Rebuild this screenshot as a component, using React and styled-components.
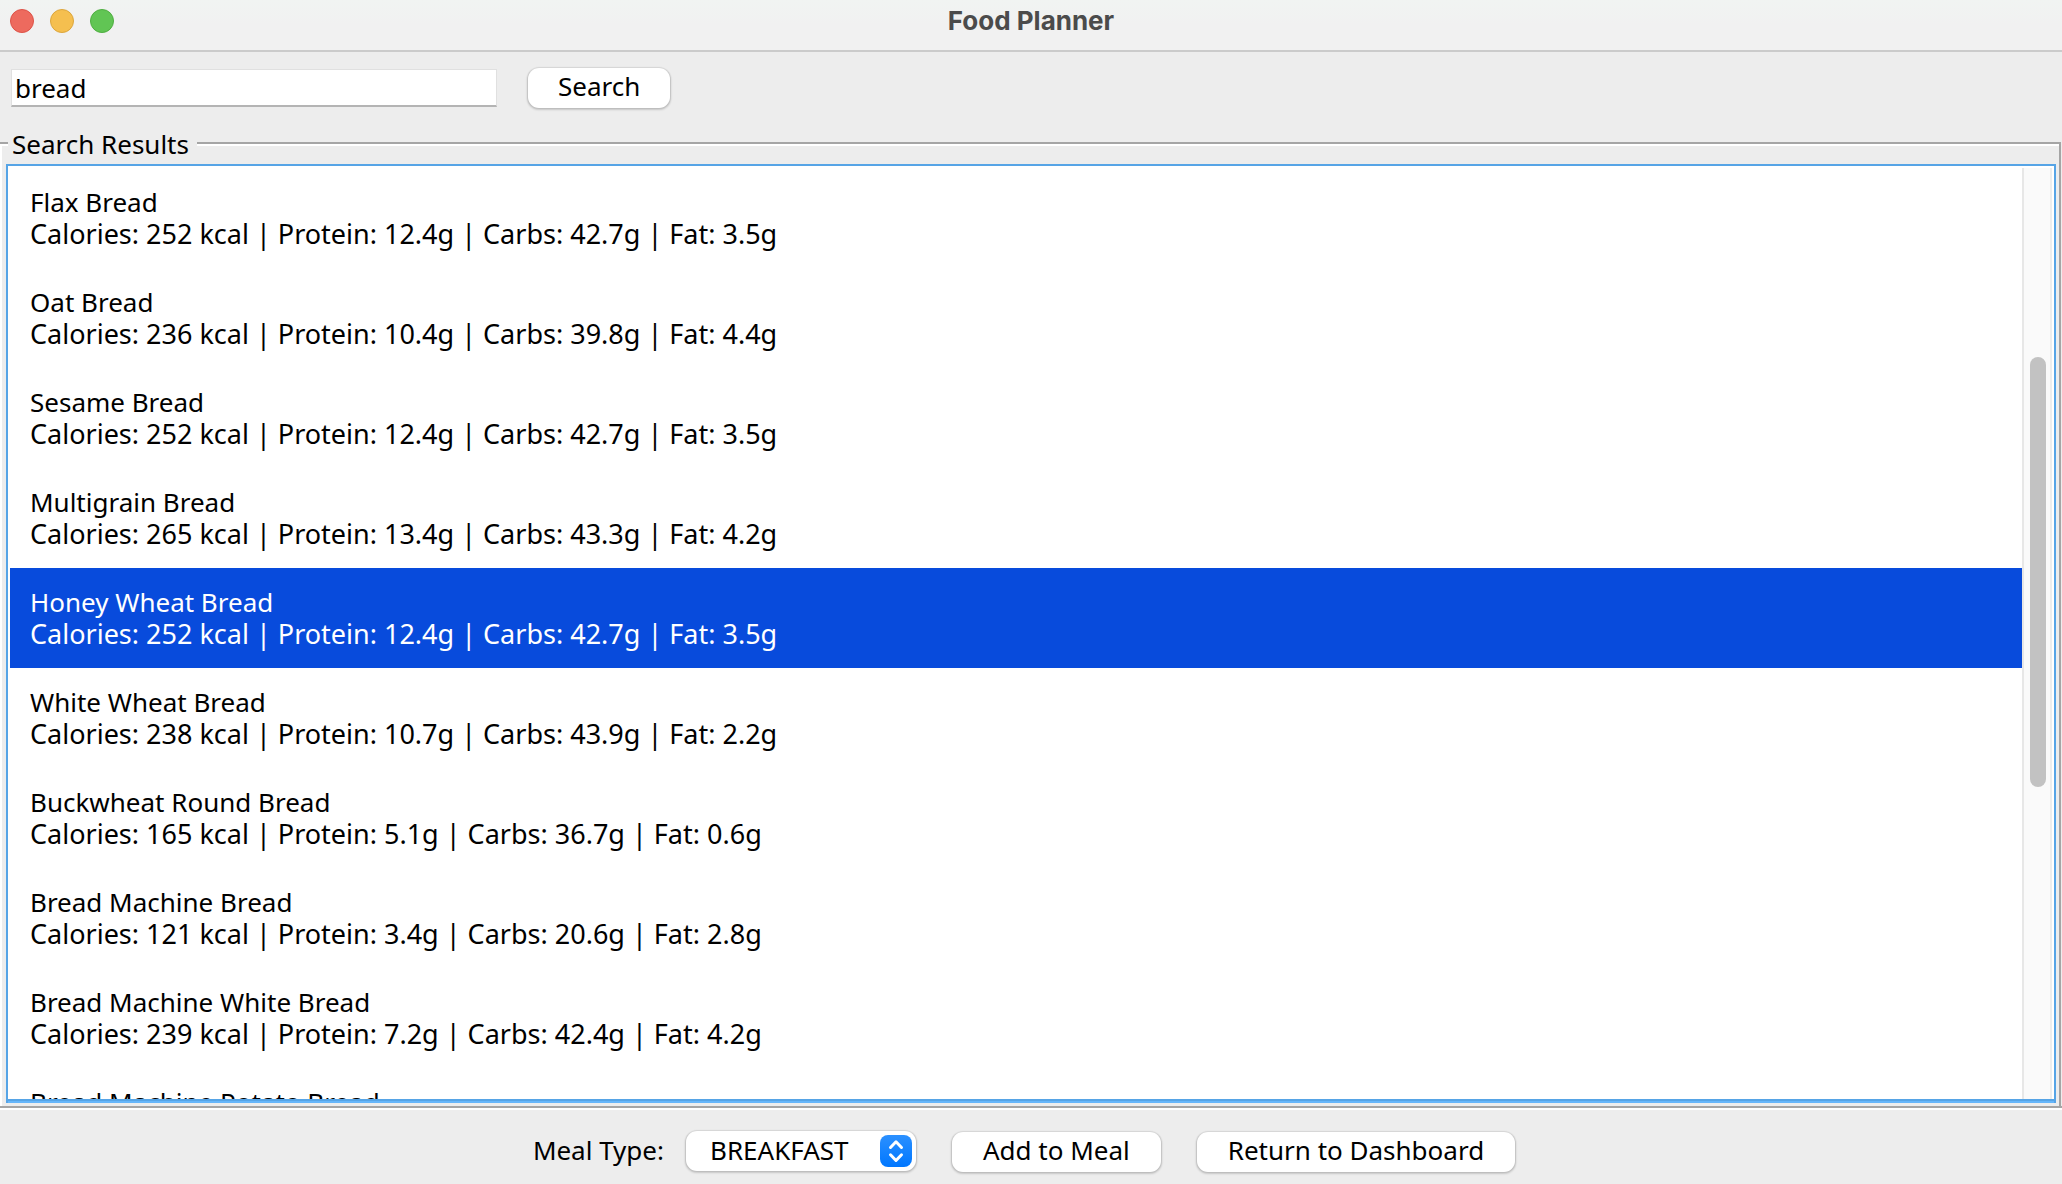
import React, { useState } from "react";
import styled, { createGlobalStyle } from "styled-components";

const GlobalStyle = createGlobalStyle`
  *, *::before, *::after { box-sizing: border-box; }
  body { margin: 0; background: #ededed; }
  body, button, input, select {
    font-family: "Noto Sans", "Open Sans", sans-serif;
    font-size: 26px;
    line-height: 32px;
    color: #000;
  }
`;

const Window = styled.div`
  display: flex;
  flex-direction: column;
  height: 100vh;
  overflow: hidden;
  background: #ededed;
`;

const TitleBar = styled.header`
  display: grid;
  grid-template-columns: 1fr auto 1fr;
  align-items: center;
  flex: none;
  height: 52px;
  padding: 0 10px 8px;
  background: linear-gradient(#f1f4f2, #f1f1f1 24px);
  border-bottom: 2px solid #cbcbcb;
`;

const Lights = styled.div`
  display: flex;
  gap: 16px;
`;

const Light = styled.button`
  width: 24px;
  height: 24px;
  padding: 0;
  border: 1px solid ${(p) => p.$edge};
  border-radius: 50%;
  background: ${(p) => p.$fill};
`;

const Title = styled.h1`
  margin: 0;
  font-family: Inter, sans-serif;
  font-size: 26px;
  line-height: 32px;
  font-weight: 700;
  color: #4b4b4b;
`;

const SearchBar = styled.form`
  display: flex;
  align-items: center;
  flex: none;
  gap: 31px;
  padding: 16px 11px 18px;
`;

const SearchInput = styled.input`
  width: 486px;
  height: 38px;
  padding: 0 3px;
  border: 1px solid #e0e0e0;
  border-bottom: 2px solid #b4b4b4;
  border-radius: 0;
  outline: none;
  background: #fff;
`;

const PushButton = styled.button`
  height: 40px;
  padding: 0 ${(p) => (p.$wide ? 31 : 30)}px 4px;
  border: 0;
  border-radius: 11px;
  background: #fff;
  box-shadow: 0 0 1px 1px rgba(0, 0, 0, 0.06), 0 1px 2px 1px rgba(0, 0, 0, 0.16);
`;

const Results = styled.section`
  display: flex;
  flex-direction: column;
  flex: 1;
  min-height: 0;
`;

const ResultsHeading = styled.div`
  display: grid;
  grid-template-columns: 8px auto 1fr;
  align-items: end;
  flex: none;
  padding-right: 1px;
`;

const LeftCorner = styled.div`
  height: 20px;
  border-top: 2px solid #a5a5a5;
  box-shadow: inset 2px 2px #fff;
`;

const RightCorner = styled.div`
  height: 20px;
  border-top: 2px solid #a5a5a5;
  border-right: 2px solid #a5a5a5;
  box-shadow: inset 0 2px #fff;
`;

const Rule = styled.div`
  flex: none;
  height: 4px;
  border-top: 2px solid #a5a5a5;
  border-bottom: 2px solid #fff;
`;

const Legend = styled.h2`
  margin: 0;
  padding: 0 8px 0 4px;
  font-size: 26px;
  line-height: 36px;
  font-weight: 400;
`;

const Frame = styled.div`
  display: flex;
  flex: 1;
  min-height: 0;
  margin-right: 1px;
  padding: 2px 3px 3px 4px;
  border-left: 2px solid #fff;
  border-right: 2px solid #a5a5a5;
`;

const ScrollPane = styled.div`
  display: flex;
  flex: 1;
  min-width: 0;
  padding: 2px 2px 4px;
  border: 2px solid #56a4e6;
  border-bottom: 0;
  background: #fff;
  box-shadow: inset 0 -2px #66b6fa, inset 0 -4px #56a4e6;
`;

const List = styled.ul`
  flex: 1;
  min-width: 0;
  margin: 0;
  padding: 0;
  overflow: hidden;
  list-style: none;
`;

const Item = styled.li`
  height: 100px;
  padding: 18px 20px;
  white-space: nowrap;
  cursor: default;
  background: ${(p) => (p.$selected ? "#084bdc" : "#fff")};
  color: ${(p) => (p.$selected ? "#fff" : "#000")};
`;

const Name = styled.div`
  line-height: 32px;
`;

const Facts = styled.div`
  font-size: 27px;
  line-height: 32px;
`;

const Track = styled.div`
  flex: none;
  width: 30px;
  padding: 189px 4px 0 6px;
  border-left: 2px solid #e7e7e7;
  border-right: 2px solid #ededed;
  background: #fafafa;
`;

const Thumb = styled.div`
  height: 430px;
  border-radius: 8px;
  background: #c2c2c2;
`;

const Actions = styled.footer`
  display: flex;
  align-items: baseline;
  justify-content: center;
  flex: none;
  gap: 36px;
  padding: 21px 14px 12px 0;
`;

const MealType = styled.div`
  display: flex;
  align-items: baseline;
  gap: 22px;
`;

const SelectBox = styled.div`
  display: grid;
  align-items: center;
  height: 40px;
  border-radius: 11px;
  background: #fff;
  box-shadow: 0 0 1px 1px rgba(0, 0, 0, 0.06), 0 1px 2px 1px rgba(0, 0, 0, 0.16);

  > * { grid-area: 1 / 1; }
`;

const Select = styled.select`
  width: 230px;
  height: 40px;
  padding: 0 40px 2px 24px;
  border: 0;
  border-radius: 11px;
  background: transparent;
  appearance: none;
`;

const Stepper = styled.svg`
  justify-self: end;
  width: 32px;
  height: 32px;
  margin-right: 4px;
  pointer-events: none;
`;

const FOODS = [
  ["Flax Bread", 252, 12.4, 42.7, 3.5],
  ["Oat Bread", 236, 10.4, 39.8, 4.4],
  ["Sesame Bread", 252, 12.4, 42.7, 3.5],
  ["Multigrain Bread", 265, 13.4, 43.3, 4.2],
  ["Honey Wheat Bread", 252, 12.4, 42.7, 3.5],
  ["White Wheat Bread", 238, 10.7, 43.9, 2.2],
  ["Buckwheat Round Bread", 165, 5.1, 36.7, 0.6],
  ["Bread Machine Bread", 121, 3.4, 20.6, 2.8],
  ["Bread Machine White Bread", 239, 7.2, 42.4, 4.2],
  ["Bread Machine Potato Bread"],
];

export default function App() {
  const [query, setQuery] = useState("bread");
  const [selected, setSelected] = useState(4);

  return (
    <Window>
      <GlobalStyle />
      <TitleBar>
        <Lights>
          <Light type="button" aria-label="Close" $fill="#ed6a5e" $edge="#dd5247" />
          <Light type="button" aria-label="Minimize" $fill="#f5bf4f" $edge="#dca63c" />
          <Light type="button" aria-label="Zoom" $fill="#61c554" $edge="#4fae41" />
        </Lights>
        <Title>Food Planner</Title>
      </TitleBar>

      <SearchBar onSubmit={(e) => e.preventDefault()}>
        <SearchInput
          aria-label="Search foods"
          value={query}
          onChange={(e) => setQuery(e.target.value)}
        />
        <PushButton type="submit">Search</PushButton>
      </SearchBar>

      <Results aria-labelledby="results-title">
        <ResultsHeading>
          <LeftCorner />
          <Legend id="results-title">Search Results</Legend>
          <RightCorner />
        </ResultsHeading>
        <Frame>
          <ScrollPane>
            <List role="listbox" aria-labelledby="results-title">
              {FOODS.map(([name, kcal, protein, carbs, fat], i) => (
                <Item
                  key={name}
                  role="option"
                  aria-selected={i === selected}
                  $selected={i === selected}
                  onClick={() => setSelected(i)}
                >
                  <Name>{name}</Name>
                  {kcal && (
                    <Facts>
                      {`Calories: ${kcal} kcal | Protein: ${protein}g | Carbs: ${carbs}g | Fat: ${fat}g`}
                    </Facts>
                  )}
                </Item>
              ))}
            </List>
            <Track>
              <Thumb />
            </Track>
          </ScrollPane>
        </Frame>
        <Rule />
      </Results>

      <Actions>
        <MealType>
          <label htmlFor="meal-type">Meal Type:</label>
          <SelectBox>
            <Select id="meal-type" defaultValue="BREAKFAST">
              <option>BREAKFAST</option>
              <option>LUNCH</option>
              <option>DINNER</option>
              <option>SNACK</option>
            </Select>
            <Stepper viewBox="0 0 32 32" aria-hidden="true">
              <defs>
                <linearGradient id="stepper-fill" x1="0" y1="0" x2="0" y2="1">
                  <stop offset="0" stopColor="#2b90ff" />
                  <stop offset="1" stopColor="#0077ff" />
                </linearGradient>
              </defs>
              <rect width="32" height="32" rx="8" fill="url(#stepper-fill)" />
              <path
                d="M10.500 12.500 16 6.800l5.500 5.700M10.500 19.800l5.500 5.700 5.500-5.700"
                fill="none"
                stroke="#fff"
                strokeWidth="3"
                strokeLinecap="round"
                strokeLinejoin="round"
              />
            </Stepper>
          </SelectBox>
        </MealType>
        <PushButton type="button" $wide>Add to Meal</PushButton>
        <PushButton type="button" $wide>Return to Dashboard</PushButton>
      </Actions>
    </Window>
  );
}
